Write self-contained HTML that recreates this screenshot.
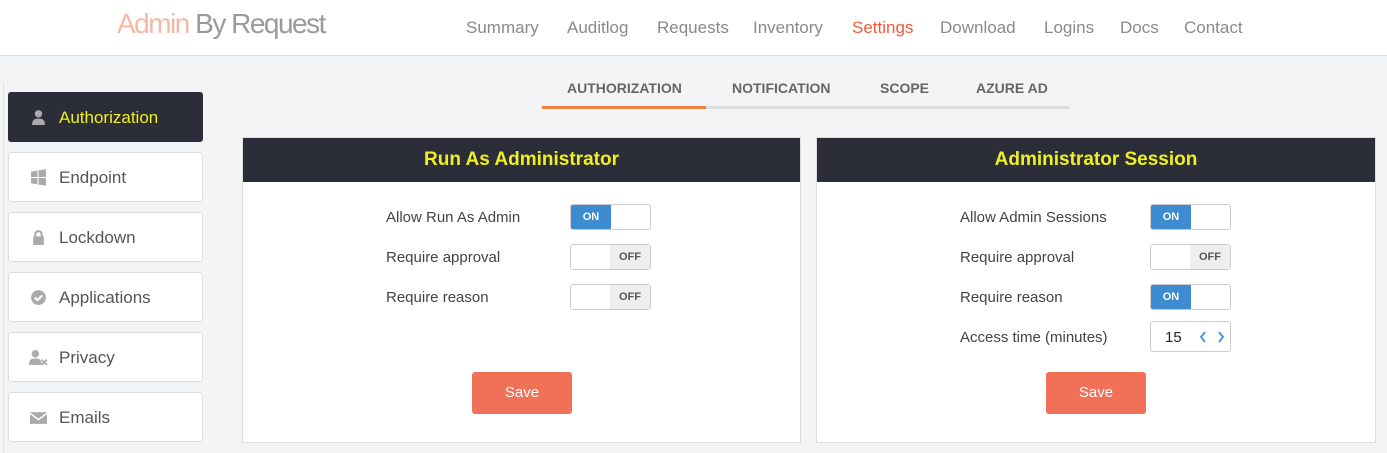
<!DOCTYPE html><html><head><style>
*{box-sizing:border-box;margin:0;padding:0}
body{width:1387px;height:453px;overflow:hidden;background:#f3f4f6;font-family:"Liberation Sans",sans-serif;position:relative;color:#444}
.hdr{position:absolute;left:0;top:0;width:1387px;height:56px;background:#fff;border-bottom:1px solid #ddd}
.logo{position:absolute;left:117px;top:8px;font-size:28px;letter-spacing:-1.5px;color:#9a9a9a}
.logo span{color:#f5b8a5}
.nav{position:absolute;top:18px;font-size:17px;color:#8a8a8a}
.side{position:absolute;left:3px;top:82px;width:1px;height:371px;background:#e2e2e2}
.item{position:absolute;left:8px;width:195px;height:50px;background:#fff;border:1px solid #ddd;border-radius:3px;font-size:17px;color:#555;line-height:50px;padding-left:50px}
.item.act{background:#2b2e38;color:#f0f020;border-color:#2b2e38}
.ic{position:absolute;left:21px;top:16px;width:17px;height:17px}
.tab{position:absolute;top:80px;font-size:14px;font-weight:bold;color:#666}
.panel{position:absolute;top:137px;height:306px;background:#fff;border:1px solid #ddd}
.ph{height:44px;background:#2b2e38;color:#f0f020;font-size:19px;font-weight:bold;text-align:center;line-height:44px}
.lab{position:absolute;font-size:15px;color:#444}
.tg{position:absolute;width:81px;height:26px;border:1px solid #ccc;border-radius:3px;background:#fff;font-size:11px;font-weight:bold}
.tg .on{position:absolute;left:0;top:0;width:40px;height:24px;background:#3d8bd0;color:#fff;text-align:center;line-height:24px;border-radius:2px 0 0 2px}
.tg .off{position:absolute;right:0;top:0;width:40px;height:24px;background:#eee;color:#555;text-align:center;line-height:24px}
.btn{position:absolute;width:100px;height:42px;background:#f07058;color:#fff;border-radius:3px;font-size:15px;text-align:center;line-height:42px}
</style></head><body>
<div class="hdr"><div class="logo"><span>Admin</span> By Request</div>
<div class="nav" style="left:466px">Summary</div><div class="nav" style="left:567px">Auditlog</div><div class="nav" style="left:657px">Requests</div><div class="nav" style="left:753px">Inventory</div><div class="nav" style="left:852px;color:#f05a3a">Settings</div><div class="nav" style="left:940px">Download</div><div class="nav" style="left:1044px">Logins</div><div class="nav" style="left:1120px">Docs</div><div class="nav" style="left:1184px">Contact</div></div>
<div class="side"></div>
<div class="item act" style="top:92px"><svg class="ic" viewBox="0 0 16 16"><circle cx="8" cy="4.5" r="3.5" fill="#aaa"/><path d="M2 15c0-5 2-6 6-6s6 1 6 6z" fill="#aaa"/></svg>Authorization</div>
<div class="item" style="top:152px"><svg class="ic" viewBox="0 0 16 16" fill="#aaa"><path d="M1 2.5l6-1v6H1zM8 1.3l7-1.1v7.3H8zM1 8.5h6v6l-6-1zM8 8.5h7v7.3l-7-1.1z"/></svg>Endpoint</div>
<div class="item" style="top:212px"><svg class="ic" viewBox="0 0 16 16" fill="none"><rect x="3" y="7" width="10" height="8" fill="#aaa"/><path d="M5 7V5a3 3 0 0 1 6 0v2" stroke="#aaa" stroke-width="2"/></svg>Lockdown</div>
<div class="item" style="top:272px"><svg class="ic" viewBox="0 0 16 16"><circle cx="8" cy="8" r="7" fill="#aaa"/><path d="M4.5 8l2.5 2.5 4.5-4.5" stroke="#fff" stroke-width="2" fill="none"/></svg>Applications</div>
<div class="item" style="top:332px"><svg class="ic" viewBox="0 0 18 16" style="width:19px;left:20px"><circle cx="6" cy="4.5" r="3.5" fill="#aaa"/><path d="M0 15c0-5 2-6 6-6s6 1 6 6z" fill="#aaa"/><path d="M12 10l5 5M17 10l-5 5" stroke="#aaa" stroke-width="1.8"/></svg>Privacy</div>
<div class="item" style="top:392px"><svg class="ic" viewBox="0 0 16 16" style="width:17px;left:21px"><rect x="0" y="3" width="16" height="11" fill="#aaa"/><path d="M0 4l8 6 8-6" stroke="#fff" stroke-width="1.4" fill="none"/></svg>Emails</div>
<div style="position:absolute;left:542px;top:106px;width:528px;height:3px;background:#ddd"></div>
<div style="position:absolute;left:542px;top:106px;width:164px;height:3px;background:#f08040"></div>
<div class="tab" style="left:567px">AUTHORIZATION</div><div class="tab" style="left:732px">NOTIFICATION</div><div class="tab" style="left:880px">SCOPE</div><div class="tab" style="left:976px">AZURE AD</div>
<div class="panel" style="left:242px;width:559px"><div class="ph">Run As Administrator</div></div>
<div class="panel" style="left:816px;width:560px"><div class="ph">Administrator Session</div></div>
<div class="lab" style="left:386px;top:209px">Allow Run As Admin</div>
<div class="lab" style="left:386px;top:249px">Require approval</div>
<div class="lab" style="left:386px;top:289px">Require reason</div>
<div class="tg" style="left:570px;top:204px"><div class="on">ON</div></div>
<div class="tg" style="left:570px;top:244px"><div class="off">OFF</div></div>
<div class="tg" style="left:570px;top:284px"><div class="off">OFF</div></div>
<div class="btn" style="left:472px;top:372px">Save</div>
<div class="lab" style="left:960px;top:209px">Allow Admin Sessions</div>
<div class="lab" style="left:960px;top:249px">Require approval</div>
<div class="lab" style="left:960px;top:289px">Require reason</div>
<div class="lab" style="left:960px;top:329px">Access time (minutes)</div>
<div class="tg" style="left:1150px;top:204px"><div class="on">ON</div></div>
<div class="tg" style="left:1150px;top:244px"><div class="off">OFF</div></div>
<div class="tg" style="left:1150px;top:284px"><div class="on">ON</div></div>
<div class="tg" style="left:1150px;top:321px;height:31px;font-weight:normal"><span style="position:absolute;left:14px;top:7px;font-size:15px;color:#222">15</span><svg style="position:absolute;left:48px;top:9px" width="26" height="12" viewBox="0 0 26 12" fill="none" stroke="#3d8bd0" stroke-width="1.8"><path d="M6 1L2 6l4 5M20 1l4 5-4 5"/></svg></div>
<div class="btn" style="left:1046px;top:372px">Save</div>
</body></html>
